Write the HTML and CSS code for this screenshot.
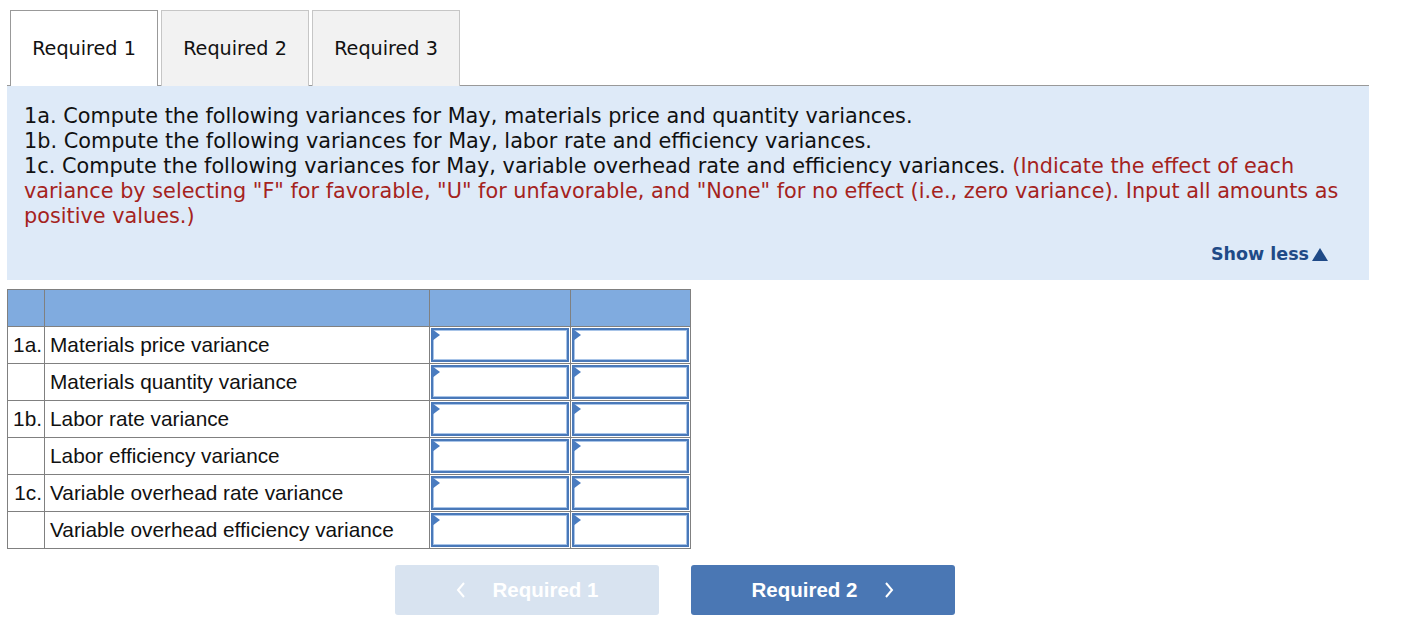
FILE: index.html
```html
<!DOCTYPE html>
<html>
<head>
<meta charset="utf-8">
<link rel="stylesheet" href="styles.css">
</head>
<body>
<div class="page">
  <div class="tabs">
    <div class="tab active">Required 1</div>
    <div class="tab">Required 2</div>
    <div class="tab">Required 3</div>
  </div>
  <div class="panel">
    <p class="instr">1a. Compute the following variances for May, materials price and quantity variances.<br>1b. Compute the following variances for May, labor rate and efficiency variances.<br>1c. Compute the following variances for May, variable overhead rate and efficiency variances. <span class="red">(Indicate the effect of each variance by selecting "F" for favorable, "U" for unfavorable, and "None" for no effect (i.e., zero variance). Input all amounts as positive values.)</span></p>
    <div class="showless">Show less<svg class="tri" width="16" height="13" viewBox="0 0 16 13"><polygon points="8,0 16,13 0,13" fill="#1f4a87"/></svg></div>
  </div>
  <table class="grid">
    <colgroup><col class="c1"><col class="c2"><col class="c3"><col class="c4"></colgroup>
    <tr class="head"><th></th><th></th><th></th><th></th></tr>
    <tr><td class="num">1a.</td><td class="lbl">Materials price variance</td><td class="in"><div class="box"></div></td><td class="in"><div class="box"></div></td></tr>
    <tr><td class="num"></td><td class="lbl">Materials quantity variance</td><td class="in"><div class="box"></div></td><td class="in"><div class="box"></div></td></tr>
    <tr><td class="num">1b.</td><td class="lbl">Labor rate variance</td><td class="in"><div class="box"></div></td><td class="in"><div class="box"></div></td></tr>
    <tr><td class="num"></td><td class="lbl">Labor efficiency variance</td><td class="in"><div class="box"></div></td><td class="in"><div class="box"></div></td></tr>
    <tr><td class="num">1c.</td><td class="lbl">Variable overhead rate variance</td><td class="in"><div class="box"></div></td><td class="in"><div class="box"></div></td></tr>
    <tr><td class="num"></td><td class="lbl">Variable overhead efficiency variance</td><td class="in"><div class="box"></div></td><td class="in"><div class="box"></div></td></tr>
  </table>
  <div class="nav">
    <div class="btn prev"><svg width="10" height="16" viewBox="0 0 10 16"><polyline points="8,1 2,8 8,15" fill="none" stroke="#fff" stroke-width="2"/></svg><span>Required 1</span></div>
    <div class="btn next"><span>Required 2</span><svg width="10" height="16" viewBox="0 0 10 16"><polyline points="2,1 8,8 2,15" fill="none" stroke="#fff" stroke-width="2"/></svg></div>
  </div>
</div>
</body>
</html>
```
FILE: styles.css
```css
* { box-sizing: border-box; }
body { margin: 0; background: #fff; }
.page { padding: 10px 0 0 7px; width: 1369px; }
.tabs {
  display: flex;
  gap: 3px;
  padding-left: 3px;
  border-bottom: 1px solid #999;
  height: 76px;
}
.tab {
  width: 148px;
  height: 76px;
  border: 1px solid #c6c6c6;
  border-bottom: none;
  background: #f2f2f2;
  font-family: "DejaVu Sans", Verdana, sans-serif;
  font-size: 19.2px;
  color: #111;
  display: flex;
  align-items: center;
  justify-content: center;
  padding-bottom: 1px;
}
.tab.active {
  background: #fff;
  border-color: #999;
  position: relative;
  z-index: 1;
}
.panel {
  background: #deeaf8;
  padding: 18px 17px 12px 17px;
  height: 194px;
}
.instr {
  margin: 0;
  font-family: "DejaVu Sans", Verdana, sans-serif;
  font-size: 20.8px;
  line-height: 25px;
  color: #111;
}
.red { color: #a5231d; }
.showless {
  margin-top: 13px;
  padding-right: 24px;
  text-align: right;
  font-family: "DejaVu Sans", Verdana, sans-serif;
  font-weight: bold;
  font-size: 17.5px;
  line-height: 25px;
  color: #1f4a87;
}
.tri { margin-left: 3px; vertical-align: -1px; }
.grid {
  margin-top: 9px;
  border-collapse: collapse;
  width: 683px;
  table-layout: fixed;
  font-family: "Liberation Sans", Arial, sans-serif;
  font-size: 20.8px;
  color: #111;
}
.c1 { width: 37px; }
.c2 { width: 385px; }
.c3 { width: 141px; }
.c4 { width: 120px; }
.grid th, .grid td {
  border: 1px solid #808080;
  height: 36px;
  padding: 0;
}
.grid .head th { background: #80abdf; height: 37px; }
.num { text-align: right; padding-right: 2px !important; }
.lbl { padding-left: 5px !important; }
.in { padding: 1px !important; }
.box {
  position: relative;
  height: 34px;
  border: 2px solid #4a79b9;
  box-shadow: inset 0 0 0 1px #a8c4e8;
  background: #fff;
}
.box::before {
  content: "";
  position: absolute;
  left: -1px;
  top: -1px;
  border-left: 8px solid #4a7cc0;
  border-top: 6px solid transparent;
  border-bottom: 6px solid transparent;
}
.nav {
  display: flex;
  gap: 32px;
  margin: 16px 0 0 388px;
}
.btn {
  width: 264px;
  height: 50px;
  border-radius: 3px;
  display: flex;
  align-items: center;
  justify-content: center;
  gap: 27px;
  font-family: "Liberation Sans", Arial, sans-serif;
  font-weight: bold;
  font-size: 20.5px;
  color: #fff;
}
.prev { background: #d8e3f0; }
.next { background: #4a77b4; }
```
